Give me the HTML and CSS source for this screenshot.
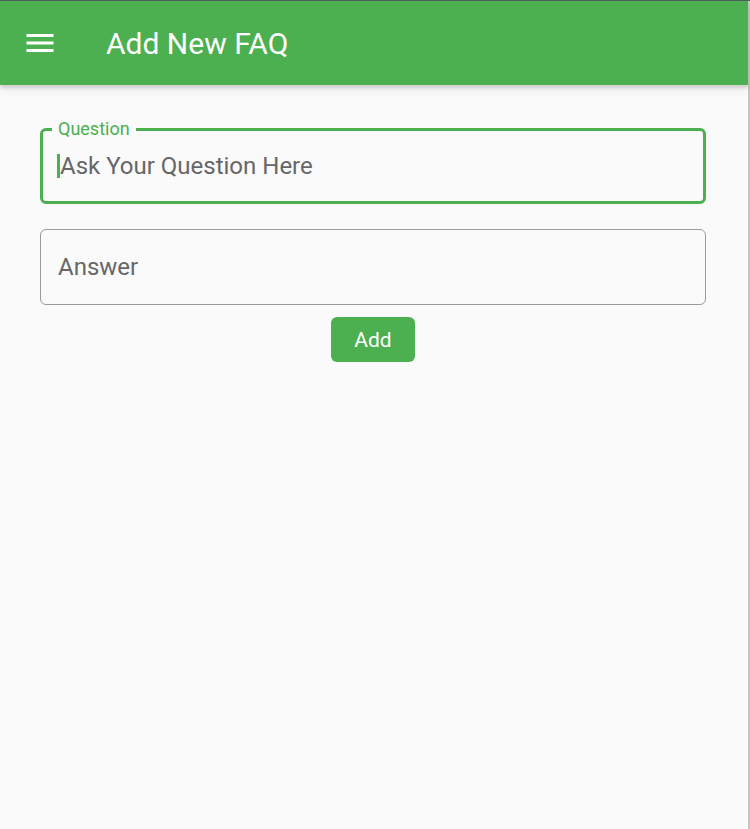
FILE: index.html
```html
<!DOCTYPE html>
<html>
<head>
<meta charset="utf-8">
<link rel="stylesheet" href="styles.css">
</head>
<body>
<div class="screen">
  <div class="app">
    <header class="appbar">
      <button class="menu-btn" aria-label="Menu">
        <svg width="36" height="36" viewBox="0 0 24 24"><path d="M3 18h18v-2H3v2zm0-5h18v-2H3v2zm0-7v2h18V6H3z" fill="#fff"/></svg>
      </button>
      <h1 class="title">Add New FAQ</h1>
    </header>
    <main class="content">
      <div class="field focused">
        <span class="label">Question</span>
        <span class="cursor"></span>
        <span class="placeholder">Ask Your Question Here</span>
      </div>
      <div class="field">
        <span class="placeholder">Answer</span>
      </div>
      <div class="actions">
        <button class="add-btn">Add</button>
      </div>
    </main>
  </div>
  <div class="edge"></div>
</div>
</body>
</html>
```
FILE: styles.css
```css
* { box-sizing: border-box; }
html, body { margin: 0; padding: 0; }
body {
  width: 750px;
  height: 829px;
  overflow: hidden;
  background: #fafafa;
  font-family: Roboto, "Liberation Sans", sans-serif;
}
.screen {
  display: flex;
  height: 829px;
  border-top: 1px solid #4e5a5b;
}
.app {
  width: 748px;
  height: 100%;
  background: #fafafa;
  display: flex;
  flex-direction: column;
}
.edge {
  width: 2px;
  background: #c6c6c6;
}
.appbar {
  position: relative;
  z-index: 1;
  height: 84px;
  background: #4caf50;
  display: flex;
  align-items: center;
  padding-left: 22px;
  box-shadow: 0 3px 3px rgba(0,0,0,0.12), 0 6px 8px rgba(0,0,0,0.06);
}
.menu-btn {
  width: 36px;
  height: 36px;
  padding: 0;
  margin: 0;
  border: 0;
  background: none;
  display: flex;
}
.title {
  margin: 0 0 0 48px;
  color: #fff;
  font-size: 30px;
  font-weight: 400;
  letter-spacing: 0;
}
.content {
  padding: 43px 42px 0 40px;
  display: flex;
  flex-direction: column;
}
.field {
  position: relative;
  height: 76px;
  border: 1.5px solid #9a9a9a;
  border-radius: 6px;
  display: flex;
  align-items: center;
  padding-left: 17px;
  margin-bottom: 25px;
}
.field + .field { margin-bottom: 12px; }
.field.focused {
  border: 3px solid #4caf50;
  padding-left: 14px;
}
.label {
  position: absolute;
  top: -12px;
  left: 9px;
  padding: 0 6px;
  background: #fafafa;
  color: #4caf50;
  font-size: 18px;
  line-height: 20px;
}
.cursor {
  width: 3px;
  height: 24px;
  background: #4caf50;
}
.placeholder {
  color: #676767;
  font-size: 24px;
  line-height: 28px;
}
.actions {
  display: flex;
  justify-content: center;
}
.add-btn {
  width: 84px;
  height: 45px;
  border: 0;
  border-radius: 6px;
  background: #4caf50;
  color: #fff;
  font-family: Roboto, "Liberation Sans", sans-serif;
  font-size: 21px;
  font-weight: 400;
  padding: 0;
}
```
